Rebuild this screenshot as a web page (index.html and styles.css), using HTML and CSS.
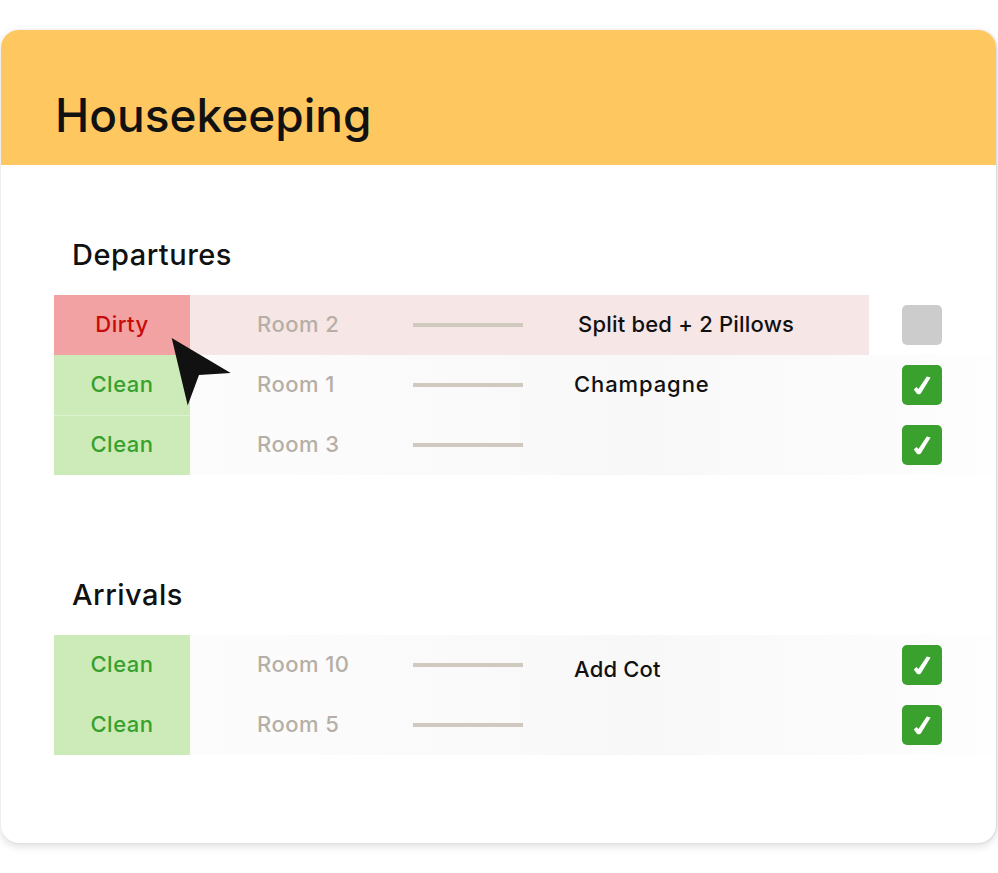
FILE: index.html
```html
<!DOCTYPE html>
<html lang="en">
<head>
<meta charset="utf-8">
<title>Housekeeping</title>
<link rel="stylesheet" href="styles.css">
</head>
<body>
<main class="card">
  <header class="card-header"><h1 class="card-title">Housekeeping</h1></header>

  <section class="group group-departures">
    <h2 class="group-title">Departures</h2>
    <div class="row row-dirty">
      <div class="row-main">
        <div class="status status-dirty">Dirty</div>
        <div class="room">Room 2</div>
        <div class="bar"></div>
        <div class="note note-dirty">Split bed + 2 Pillows</div>
      </div>
      <div class="check check-off"></div>
    </div>
    <div class="row">
      <div class="row-main">
        <div class="status status-clean">Clean</div>
        <div class="room">Room 1</div>
        <div class="bar"></div>
        <div class="note note-wide">Champagne</div>
      </div>
      <div class="check"><svg class="tick" viewBox="0 0 20 20"><path d="M1.8 14.4 4.4 12 6.4 14 14.8 1.4 18.6 2.6 8.8 18.4Q6.6 20.2 4.8 18.4Z"/></svg></div>
    </div>
    <div class="row">
      <div class="row-main">
        <div class="status status-clean status-split">Clean</div>
        <div class="room">Room 3</div>
        <div class="bar"></div>
        <div class="note"></div>
      </div>
      <div class="check"><svg class="tick" viewBox="0 0 20 20"><path d="M1.8 14.4 4.4 12 6.4 14 14.8 1.4 18.6 2.6 8.8 18.4Q6.6 20.2 4.8 18.4Z"/></svg></div>
    </div>
  </section>

  <section class="group group-arrivals">
    <h2 class="group-title">Arrivals</h2>
    <div class="row">
      <div class="row-main">
        <div class="status status-clean">Clean</div>
        <div class="room">Room 10</div>
        <div class="bar"></div>
        <div class="note note-low">Add Cot</div>
      </div>
      <div class="check"><svg class="tick" viewBox="0 0 20 20"><path d="M1.8 14.4 4.4 12 6.4 14 14.8 1.4 18.6 2.6 8.8 18.4Q6.6 20.2 4.8 18.4Z"/></svg></div>
    </div>
    <div class="row">
      <div class="row-main">
        <div class="status status-clean">Clean</div>
        <div class="room">Room 5</div>
        <div class="bar"></div>
        <div class="note"></div>
      </div>
      <div class="check"><svg class="tick" viewBox="0 0 20 20"><path d="M1.8 14.4 4.4 12 6.4 14 14.8 1.4 18.6 2.6 8.8 18.4Q6.6 20.2 4.8 18.4Z"/></svg></div>
    </div>
  </section>

  <svg class="cursor" viewBox="0 0 60 68"><path d="M0.7 0 59.7 35 28 37 16.7 67.5Z"/></svg>
</main>
</body>
</html>
```
FILE: styles.css
```css
* { box-sizing: border-box; }

html, body { margin: 0; background: #fff; }

body {
  padding: 30px 2px 0 1px;
  height: 873px;
  overflow: hidden;
  font-family: "Inter", "Liberation Sans", sans-serif;
  color: #111;
}

.card {
  position: relative;
  height: 813px;
  border-radius: 18px;
  background: #fff;
  overflow: hidden;
  box-shadow: 0 3px 8px rgba(0, 0, 0, 0.14), 1px 0 2px rgba(0, 0, 0, 0.1);
}

.card-header {
  height: 135px;
  padding: 58px 0 0 54px;
  background: #fec75f;
}

.card-title {
  margin: 0;
  font-size: 46px;
  line-height: 54px;
  font-weight: 500;
  letter-spacing: 0;
  color: #111;
}

.group { padding-left: 53px; }
.group-departures { padding-top: 74px; }
.group-arrivals { padding-top: 104px; }

.group-title {
  margin: 0 0 24px 18px;
  font-size: 29px;
  line-height: 32px;
  font-weight: 500;
  letter-spacing: 0.5px;
}

.row {
  display: flex;
  height: 60px;
  background: linear-gradient(to right, #fdfdfd 0%, #fbfbfb 30%, #f8f8f8 62%, #fbfbfb 85%, #fefefe 100%);
}

.row-dirty { background: none; }

.row-main {
  display: grid;
  grid-template-columns: 136px 68px 155px 110px 1fr;
  align-items: center;
  width: 815px;
  height: 60px;
}

.row-dirty .row-main { background: #f7e6e6; }

.status {
  align-self: stretch;
  display: flex;
  align-items: center;
  justify-content: center;
  padding-bottom: 2px;
  font-size: 22px;
  font-weight: 500;
  letter-spacing: 0.5px;
}

.status-clean { background: #cdebb9; color: #38a02d; }
.status-dirty { background: #f2a2a2; color: #c80a0a; }
.status-split { box-shadow: inset 0 1px 0 #dcf1ce; }

.room {
  grid-column: 2 / 4;
  padding: 0 0 2px 67px;
  font-size: 22px;
  font-weight: 500;
  letter-spacing: 0.45px;
  color: #b5afa7;
}

.bar {
  height: 4px;
  background: #cfc9bf;
}

.note {
  padding: 0 0 2px 51px;
  font-size: 22px;
  font-weight: 500;
  letter-spacing: 0.2px;
  color: #111;
}

.note-dirty { padding-left: 55px; }
.note-wide { letter-spacing: 0.9px; }
.note-low { padding: 7px 0 0 51px; }

.check {
  display: flex;
  align-items: center;
  justify-content: center;
  width: 40px;
  height: 40px;
  margin: 10px 0 0 33px;
  border-radius: 5px;
  background: #3aa02e;
}

.check-off { background: #cccccc; }

.tick { width: 20px; height: 20px; }

.tick path { fill: #fff; }

.cursor {
  position: absolute;
  left: 170px;
  top: 308px;
  width: 60px;
  height: 68px;
}

.cursor path { fill: #111; }
```
